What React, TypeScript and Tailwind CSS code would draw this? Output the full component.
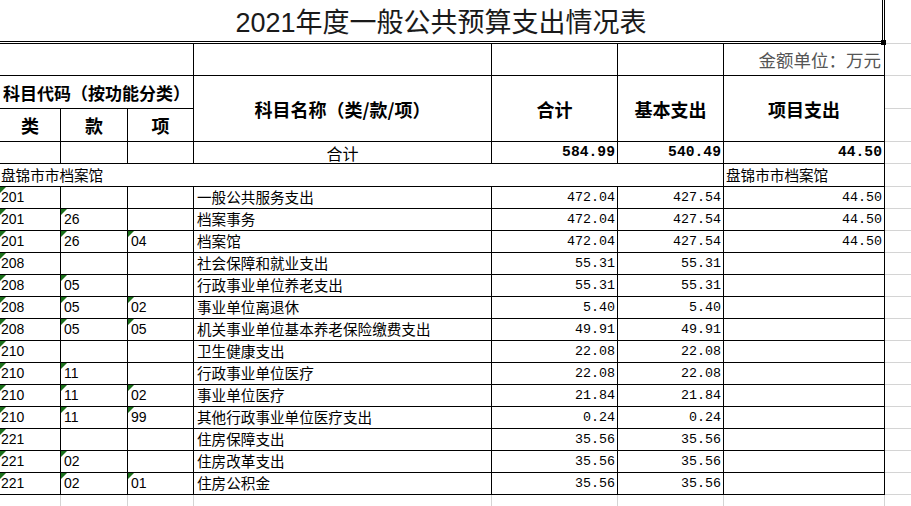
import React from "react";

const CJK = "font-['Noto_Sans_CJK_SC',sans-serif]";
const LAT = "font-['Liberation_Sans','Noto_Sans_CJK_SC',sans-serif]";
const MONO = "font-['Liberation_Mono','Noto_Sans_CJK_SC',monospace]";

type Row = [string, string, string, string, string, string, string];

const rows: Row[] = [
  ["201", "", "", "一般公共服务支出", "472.04", "427.54", "44.50"],
  ["201", "26", "", "档案事务", "472.04", "427.54", "44.50"],
  ["201", "26", "04", "档案馆", "472.04", "427.54", "44.50"],
  ["208", "", "", "社会保障和就业支出", "55.31", "55.31", ""],
  ["208", "05", "", "行政事业单位养老支出", "55.31", "55.31", ""],
  ["208", "05", "02", "事业单位离退休", "5.40", "5.40", ""],
  ["208", "05", "05", "机关事业单位基本养老保险缴费支出", "49.91", "49.91", ""],
  ["210", "", "", "卫生健康支出", "22.08", "22.08", ""],
  ["210", "11", "", "行政事业单位医疗", "22.08", "22.08", ""],
  ["210", "11", "02", "事业单位医疗", "21.84", "21.84", ""],
  ["210", "11", "99", "其他行政事业单位医疗支出", "0.24", "0.24", ""],
  ["221", "", "", "住房保障支出", "35.56", "35.56", ""],
  ["221", "02", "", "住房改革支出", "35.56", "35.56", ""],
  ["221", "02", "01", "住房公积金", "35.56", "35.56", ""],
];

// plain cell with the black grid border on right and bottom
function Cell({ className = "", children }: { className?: string; children?: React.ReactNode }) {
  return (
    <div className={`relative flex overflow-hidden whitespace-nowrap border-r border-b border-black ${className}`}>
      {children}
    </div>
  );
}

// empty grid cell out past the table edge
const Spare = ({ className = "" }: { className?: string }) => (
  <div className={`border-b border-[#d4d4d4] ${className}`} />
);

// green "number stored as text" marker
const Flag = () => (
  <span className="absolute left-0 top-0 h-0 w-0 border-t-[6px] border-r-[6px] border-t-[#1a6e1a] border-r-transparent" />
);

const head = `${CJK} text-[18px] font-bold leading-none text-black`;

function CodeCell({ code, first }: { code: string; first?: boolean }) {
  return (
    <Cell className={`items-end pb-[2px] ${first ? "pl-[1px]" : "pl-[3px]"}`}>
      {code && <Flag />}
      <span className={`${LAT} text-[14px] leading-[17px] text-black`}>{code}</span>
    </Cell>
  );
}

function NumCell({ value, bold }: { value: string; bold?: boolean }) {
  return (
    <Cell className="items-end justify-end pb-[2px] pr-[2px]">
      <span
        className={`${MONO} ${bold ? "text-[14.7px] font-bold" : "text-[13.33px]"} leading-[17px] text-black`}
      >
        {value}
      </span>
    </Cell>
  );
}

export default function App() {
  return (
    <div className="h-[506px] w-[911px] overflow-hidden bg-white">
      <div className="grid grid-cols-[61px_67px_66px_298px_126px_106px_161px_26px] grid-rows-[44px_32px_33px_33px_22px_23px_repeat(14,22px)_12px]">
        {/* title */}
        <div className="relative col-span-7 flex items-center justify-center border-r-[3px] border-b-[3px] border-double border-black pt-[5px]">
          <span className={`${LAT} text-[27px] leading-none text-[#1a1a1a]`}>
            2021年度一般公共预算支出情况表
          </span>
          <span className="absolute -right-[4px] -bottom-[4px] h-[5px] w-[5px] bg-black" />
        </div>
        <Spare />

        {/* header row 1 */}
        <Cell className="col-span-3" />
        <Cell />
        <Cell />
        <Cell />
        <Cell className="items-center justify-end pr-[3px]">
          <span className={`${CJK} text-[17.5px] leading-none text-[#555]`}>金额单位：万元</span>
        </Cell>
        <Spare />

        {/* header rows 2-3 */}
        <Cell className="col-span-3 items-center justify-center">
          <span className={`${CJK} text-[17px] font-bold leading-none text-black`}>科目代码（按功能分类）</span>
        </Cell>
        <Cell className="row-span-2 items-center justify-center">
          <span className={head}>科目名称（类/款/项）</span>
        </Cell>
        <Cell className="row-span-2 items-center justify-center">
          <span className={head}>合计</span>
        </Cell>
        <Cell className="row-span-2 items-center justify-center">
          <span className={head}>基本支出</span>
        </Cell>
        <Cell className="row-span-2 items-center justify-center">
          <span className={head}>项目支出</span>
        </Cell>
        <Spare />
        {["类", "款", "项"].map((t) => (
          <Cell key={t} className="items-center justify-center">
            <span className={head}>{t}</span>
          </Cell>
        ))}
        <Spare />

        {/* total row */}
        <Cell />
        <Cell />
        <Cell />
        <Cell className="items-end justify-center pb-[1px]">
          <span className={`${CJK} text-[16px] leading-[18px]`}>合计</span>
        </Cell>
        <NumCell value="584.99" bold />
        <NumCell value="540.49" bold />
        <NumCell value="44.50" bold />
        <Spare />

        {/* unit row */}
        <Cell className="col-span-6 items-end pb-[2px] pl-[1px]">
          <span className={`${CJK} text-[14.6px] leading-[18px]`}>盘锦市市档案馆</span>
        </Cell>
        <Cell className="items-end pb-[2px] pl-[2px]">
          <span className={`${CJK} text-[14.6px] leading-[18px]`}>盘锦市市档案馆</span>
        </Cell>
        <Spare />

        {rows.map((r, i) => (
          <React.Fragment key={i}>
            <CodeCell code={r[0]} first />
            <CodeCell code={r[1]} />
            <CodeCell code={r[2]} />
            <Cell className="items-end pb-[2px] pl-[3px]">
              <span className={`${CJK} text-[14.6px] leading-[18px]`}>{r[3]}</span>
            </Cell>
            <NumCell value={r[4]} />
            <NumCell value={r[5]} />
            <NumCell value={r[6]} />
            <Spare />
          </React.Fragment>
        ))}

        {/* empty sheet below */}
        {Array.from({ length: 7 }).map((_, i) => (
          <div key={i} className="border-r border-[#d4d4d4]" />
        ))}
        <div />
      </div>
    </div>
  );
}
